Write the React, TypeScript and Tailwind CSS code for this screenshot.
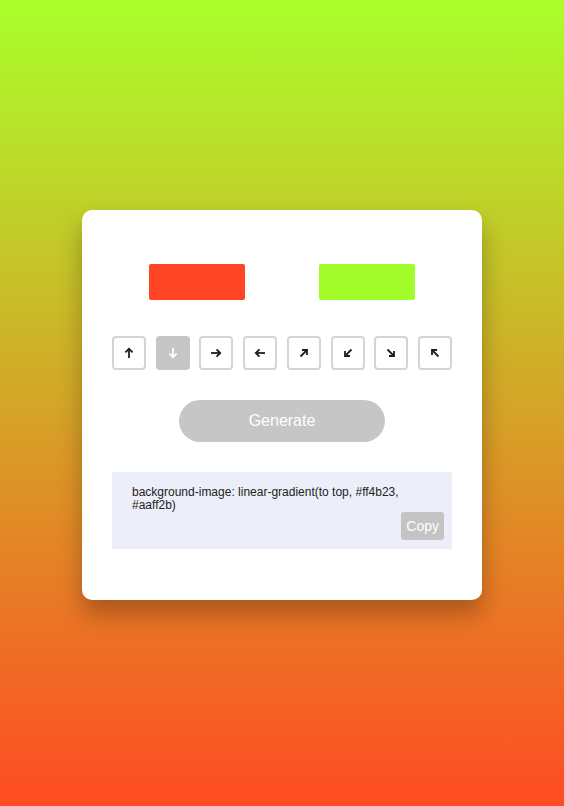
import React from "react";

const dirs = ["t", "b", "r", "l", "tr", "bl", "br", "tl"];

function Arrow({ d, color }: { d: string; color: string }) {
  const common = {
    fill: "none",
    stroke: color,
    strokeWidth: 1.8,
    strokeLinecap: "butt" as const,
    strokeLinejoin: "miter" as const,
  };
  let content: React.ReactNode = null;
  if (d === "t")
    content = (
      <>
        <line x1="6" y1="11" x2="6" y2="1.8" {...common} />
        <polyline points="2.4,5.4 6,1.8 9.6,5.4" {...common} />
      </>
    );
  if (d === "b")
    content = (
      <>
        <line x1="6" y1="1" x2="6" y2="10.2" {...common} />
        <polyline points="2.4,6.6 6,10.2 9.6,6.6" {...common} />
      </>
    );
  if (d === "r")
    content = (
      <>
        <line x1="1" y1="6" x2="10.2" y2="6" {...common} />
        <polyline points="6.6,2.4 10.2,6 6.6,9.6" {...common} />
      </>
    );
  if (d === "l")
    content = (
      <>
        <line x1="11" y1="6" x2="1.8" y2="6" {...common} />
        <polyline points="5.4,2.4 1.8,6 5.4,9.6" {...common} />
      </>
    );
  if (d === "tr")
    content = (
      <>
        <line x1="2.5" y1="9.5" x2="9" y2="3" {...common} />
        <polyline points="4,3 9,3 9,8" {...common} />
      </>
    );
  if (d === "bl")
    content = (
      <>
        <line x1="9.5" y1="2.5" x2="3" y2="9" {...common} />
        <polyline points="3,4 3,9 8,9" {...common} />
      </>
    );
  if (d === "br")
    content = (
      <>
        <line x1="2.5" y1="2.5" x2="9" y2="9" {...common} />
        <polyline points="9,4 9,9 4,9" {...common} />
      </>
    );
  if (d === "tl")
    content = (
      <>
        <line x1="9.5" y1="9.5" x2="3" y2="3" {...common} />
        <polyline points="3,8 3,3 8,3" {...common} />
      </>
    );
  return (
    <svg width="12" height="12" viewBox="0 0 12 12">
      {content}
    </svg>
  );
}

export default function App() {
  return (
    <div
      className="w-full h-[806px] flex items-center justify-center pt-1 bg-[linear-gradient(to_top,#ff4b23,#aaff2b)]"
      style={{ fontFamily: '"Liberation Sans", Arial, sans-serif' }}
    >
      <div className="w-[400px] h-[390px] bg-white rounded-[10px] shadow-[0_14px_24px_rgba(0,0,0,0.28)] px-[30px] pt-[54px] pb-[51px] flex flex-col">
        <div className="flex justify-around">
          <div className="w-[96px] h-[36px] rounded-[2px] bg-[#ff4523]" />
          <div className="w-[96px] h-[36px] rounded-[2px] bg-[#a2fc2a]" />
        </div>
        <div className="flex justify-between mt-[36px]">
          {dirs.map((d) => {
            const active = d === "b";
            return (
              <button
                key={d}
                className={
                  active
                    ? "w-[34px] h-[34px] rounded-[4px] border-2 border-[#c6c6c6] bg-[#c6c6c6] flex items-center justify-center"
                    : "w-[34px] h-[34px] rounded-[4px] border-2 border-[#d3d3da] bg-white flex items-center justify-center"
                }
              >
                <Arrow d={d} color={active ? "#ffffff" : "#1f1f1f"} />
              </button>
            );
          })}
        </div>
        <div className="flex justify-center mt-[30px]">
          <button className="w-[206px] h-[42px] rounded-full bg-[#c6c6c6] text-white text-[16px]">
            Generate
          </button>
        </div>
        <div className="mt-[30px] bg-[#eceff9] h-[77px] flex flex-col pt-[14px] pb-[9px]">
          <div className="px-5 text-[12px] leading-[13px] text-[#222]">
            background-image: linear-gradient(to top, #ff4b23, #aaff2b)
          </div>
          <div className="flex justify-end pr-2">
            <button className="h-[28px] px-[5px] rounded-[3px] bg-[#c4c4c4] text-white text-[14px]">
              Copy
            </button>
          </div>
        </div>
      </div>
    </div>
  );
}
